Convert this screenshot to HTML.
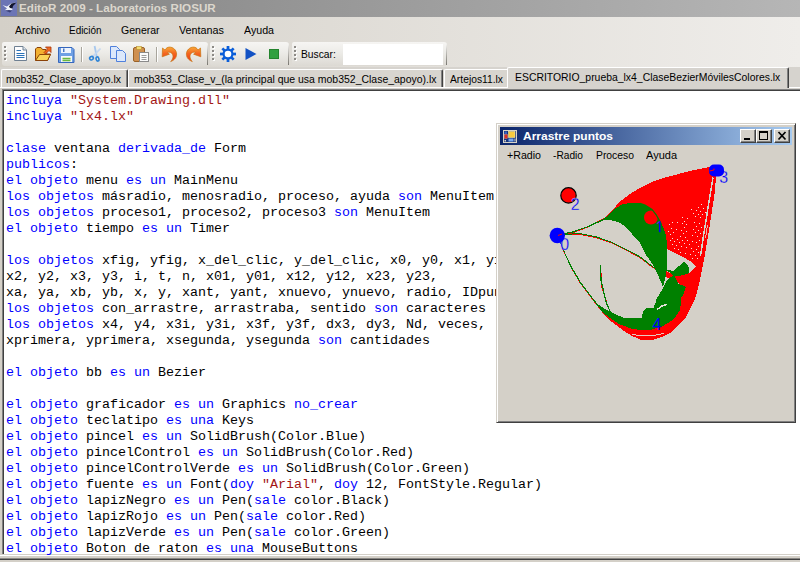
<!DOCTYPE html>
<html><head><meta charset="utf-8">
<style>
*{margin:0;padding:0;box-sizing:border-box}
html,body{width:800px;height:562px;overflow:hidden;background:#fff;font-family:"Liberation Sans",sans-serif;font-size:11.5px;color:#000}
.abs{position:absolute}
.tx{position:absolute;white-space:nowrap;transform-origin:0 0;line-height:14px;font-size:11.5px}
#title{left:0;top:0;width:800px;height:17px;background:linear-gradient(90deg,#828282,#b6b6b6)}
#menu{left:0;top:17px;width:800px;height:25px;background:linear-gradient(90deg,#d4d0c8,#efedea)}
#tool{left:0;top:42px;width:800px;height:25px;background:linear-gradient(90deg,#d4d0c8,#efedea)}
.tb{position:absolute;top:0px;height:24px;background:linear-gradient(#f6f5f3,#ecebe7 11px,#dcd9d3);border-radius:2px 3px 3px 3px}
.tb:after{content:"";position:absolute;right:0;top:2px;bottom:1px;width:1px;background:linear-gradient(rgba(120,118,112,0),rgba(110,108,102,.9))}
.grip{position:absolute;left:2px;top:4px;width:3px;height:16px}
.grip i{position:absolute;left:0;width:2px;height:2px;background:#8c8a86;box-shadow:1px 1px 0 #fff}
.sep{position:absolute;top:5px;width:1px;height:15px;background:#a8a59c;box-shadow:1px 0 0 #fff}
#tabs{left:0;top:67px;width:800px;height:22px;background:#d6d3ce}
.tab{position:absolute;top:2px;height:18px;border-top:1px solid #fff;border-left:1px solid #fff;border-right:1px solid #404040;box-shadow:inset -1px 0 0 #808080;border-radius:2px 2px 0 0;background:#d8d5cf}
.tab.sel{top:0;height:21px;background:#d6d3ce;z-index:2}
#tabline{left:0;top:87px;width:800px;height:1px;background:#fff}
#ed{left:2px;top:89px;width:798px;height:465px;background:#fff;border-left:1px solid #808080;border-top:1px solid #808080;box-shadow:inset 1px 1px 0 #404040}
pre{position:absolute;left:6px;top:93.3px;font-family:"Liberation Mono",monospace;font-size:12px;transform:scaleX(1.1109);transform-origin:0 0;line-height:16px;color:#000;white-space:pre}
pre b{font-weight:normal;color:#0000ff}
pre i{font-style:normal;color:#a31515}
#win{left:496px;top:123px;width:300px;height:300px;background:#d4d0c8;border:1px solid;border-color:#d4d0c8 #404040 #404040 #d4d0c8;box-shadow:inset 1px 1px 0 #fff,inset -1px -1px 0 #808080}
#wt{left:3px;top:3px;width:292px;height:18px;background:linear-gradient(90deg,#0a246a,#a6caf0)}
.wb{position:absolute;top:2px;width:16px;height:14px;background:#d4d0c8;border:1px solid;border-color:#fff #404040 #404040 #fff;box-shadow:inset -1px -1px 0 #808080}
</style></head><body>
<div id="title" class="abs">
<svg class="abs" style="left:1px;top:0" width="16" height="16"><rect width="16" height="16" fill="#6b75b5"/><path d="M1.5 5 L6 6.5 L10 3.5 L15 2.5 L11 6.5 L11.5 9.5 L8 11.5 L4 10 L6 8.5 Z" fill="#eef2fa"/><path d="M8 6.5 L10.5 3.5 L15.5 2.5 L12 6 L11.5 8.5 L9 8Z" fill="#10132c"/><path d="M4 10.5 L9 12.5 L11 10.5 L8 10Z" fill="#39407a"/></svg>
<span class="tx" style="left:19.2px;top:1px;font-weight:bold;color:#dcd7cd;transform:scaleX(1.013)">EditoR 2009 - Laboratorios RIOSUR</span>
</div>
<div id="menu" class="abs">
<span class="tx" style="left:15px;top:6px;transform:scaleX(.912)">Archivo</span>
<span class="tx" style="left:69.4px;top:6px;transform:scaleX(.864)">Edición</span>
<span class="tx" style="left:121.4px;top:6px;transform:scaleX(.915)">Generar</span>
<span class="tx" style="left:179.4px;top:6px;transform:scaleX(.938)">Ventanas</span>
<span class="tx" style="left:244px;top:6px;transform:scaleX(.926)">Ayuda</span>
</div>
<div id="tool" class="abs">
 <div class="tb" style="left:2px;width:206px"><div class="grip"><i style="top:0"></i><i style="top:4px"></i><i style="top:8px"></i><i style="top:12px"></i></div><div class="sep" style="left:79px"></div><div class="sep" style="left:154px"></div></div>
 <div class="tb" style="left:210px;width:79px"><div class="grip"><i style="top:0"></i><i style="top:4px"></i><i style="top:8px"></i><i style="top:12px"></i></div></div>
 <div class="tb" style="left:292px;width:155px"><div class="grip"><i style="top:0"></i><i style="top:4px"></i><i style="top:8px"></i><i style="top:12px"></i></div><div class="abs" style="left:51px;top:2px;width:100px;height:21px;background:#fff"></div></div>
 <span class="tx" style="left:301.4px;top:5px;transform:scaleX(.894)">Buscar:</span>
 <!-- ICONS -->
 <svg class="abs" style="left:0;top:0" width="300" height="25" id="icons">
  <!-- new -->
  <path d="M14.5 4.5 H23 L26.5 8 V18.5 H14.5Z" fill="#fdfdfe" stroke="#6f8092"/><path d="M23 4.5 V8 H26.5" fill="#dfe6ee" stroke="#6f8092"/>
  <path d="M16.5 8.5H21 M16.5 11.5H24.5 M16.5 13.5H24.5 M16.5 15.5H24.5" stroke="#2a72b8" stroke-width="1.2"/>
  <!-- open -->
  <path d="M35.5 18.5 V7 L37 5.5 H41 L42.5 7.5 H46 V12 H50.5 L47.5 18.5Z" fill="#f2b030" stroke="#8a4208"/>
  <path d="M35.8 18 L39.5 12.5 H50.5 L47.5 18.5 H35.8Z" fill="#f9d458" stroke="#8a4208"/>
  <path d="M44 10.5 L47.5 7 L45.5 5 H51 V10.5 L49 8.5 L45.5 12Z" fill="#f06a20" stroke="#a83208" stroke-width=".8"/>
  <!-- save -->
  <path d="M58.5 5.5 H72 L74 7.5 V20.5 H58.5Z" fill="#6fa0e4" stroke="#3566bd"/>
  <rect x="61" y="6" width="10" height="5" fill="#eef4fd"/><rect x="63" y="6.500" width="1.500" height="3.500" fill="#4a78c8"/>
  <rect x="61" y="14" width="11" height="6" fill="#f6f8fa"/><path d="M62.5 16.5H70.5 M62.5 18.5H70.5" stroke="#6ab840" stroke-width="1.3"/>
  <!-- cut -->
  <path d="M94.600 4 L96.800 15" stroke="#a8c8ee" stroke-width="1.800"/><path d="M100.500 6.500 L92.500 14.800" stroke="#c4d8f2" stroke-width="1.800"/>
  <ellipse cx="91.500" cy="16.200" rx="1.900" ry="1.600" fill="none" stroke="#2f84d6" stroke-width="1.600" transform="rotate(-30 91.500 16.200)"/><ellipse cx="97.500" cy="17" rx="1.400" ry="2.100" fill="none" stroke="#2f84d6" stroke-width="1.600" transform="rotate(-15 97.500 17)"/>
  <!-- copy -->
  <path d="M110.500 4.500 H116.500 L119.500 7.500 V16.500 H110.500Z" fill="#dce8fb" stroke="#4f80dc"/>
  <path d="M116.500 8.500 H122.500 L125.500 11.500 V19.500 H116.500Z" fill="#dce8fb" stroke="#4f80dc"/>
  <!-- paste -->
  <rect x="133.500" y="5.500" width="11" height="14" rx="1.500" fill="#cf9050" stroke="#9a6228"/><rect x="136.500" y="4.500" width="5" height="3" fill="#f4dc70" stroke="#b89030" stroke-width=".6"/>
  <rect x="139.500" y="10.500" width="9" height="9" fill="#fbfbfb" stroke="#8a8a8a"/><path d="M141.500 13.500H146.500 M141.500 15.500H146.500 M141.500 17.500H146.500" stroke="#9a9a9a"/>
  <defs><linearGradient id="ur" x1="0" y1="0" x2="0" y2="1"><stop offset="0" stop-color="#f8a838"/><stop offset=".45" stop-color="#f46420"/><stop offset="1" stop-color="#ee3818"/></linearGradient></defs><!-- undo -->
  <path d="M162.500 6 L162.200 14.800 L169.400 12.200 L167.500 10.500 C170.500 9.500 173 11.500 173 14.500 C173 16.500 172 18 170.700 19.600 C174.500 18 176.700 15.500 176.600 12 C176.500 8 173 5 169.400 5.100 C167.500 5.100 166 6.300 165 8 Z" fill="url(#ur)" stroke="#c87410" stroke-width=".7"/>
  <!-- redo -->
  <path d="M200.500 6 L200.800 14.800 L193.600 12.200 L195.500 10.500 C192.500 9.500 190 11.500 190 14.500 C190 16.500 191 18 192.300 19.600 C188.500 18 186.300 15.500 186.400 12 C186.500 8 190 5 193.600 5.100 C195.500 5.100 197 6.300 198 8 Z" fill="url(#ur)" stroke="#c87410" stroke-width=".7"/>
  <!-- gear -->
  <g transform="translate(228 12)" fill="#0b5ed9"><circle r="5.500"/><g id="t"><rect x="-1.350" y="-8" width="2.700" height="16"/></g><use href="#t" transform="rotate(45)"/><use href="#t" transform="rotate(90)"/><use href="#t" transform="rotate(135)"/><circle r="3.300" fill="#fff"/></g>
  <!-- play -->
  <path d="M245.500 6 L256.500 12 L245.500 18Z" fill="#1352c4"/>
  <!-- stop -->
  <rect x="269.500" y="7.500" width="9" height="9" fill="#32a040" stroke="#24842e"/>
 </svg>
</div>
<div id="tabs" class="abs">
 <div class="tab" style="left:1px;width:127px"></div>
 <div class="tab" style="left:128px;width:315px"></div>
 <div class="tab" style="left:444px;width:67px"></div>
 <div class="tab sel" style="left:507px;width:282px"></div>
 <span class="tx" style="left:6px;top:5px;transform:scaleX(.908)">mob352_Clase_apoyo.lx</span>
 <span class="tx" style="left:134px;top:5px;transform:scaleX(.910)">mob353_Clase_v_(la principal que usa mob352_Clase_apoyo).lx</span>
 <span class="tx" style="left:449.5px;top:5px;transform:scaleX(.895)">Artejos11.lx</span>
 <span class="tx" style="left:514.8px;top:2.5px;transform:scaleX(.905);z-index:3">ESCRITORIO_prueba_lx4_ClaseBezierMóvilesColores.lx</span>
</div>
<div id="tabline" class="abs"></div>
<div id="ed" class="abs"></div>
<div class="abs" style="left:0;top:554px;width:800px;height:8px;background:linear-gradient(#d4d0c8 0 1px,#fff 1px 2px,#d4d0c8 2px 4px,#8a8884 4px 5px,#404040 5px 6px,#d4d0c8 6px 8px)"></div>
<div class="abs" style="left:0;top:88px;width:2px;height:466px;background:#d4d0c8"></div>
<pre><b>incluya</b> <i>"System.Drawing.dll"</i>
<b>incluya</b> <i>"lx4.lx"</i>

<b>clase</b> ventana <b>derivada_de</b> Form
<b>publicos</b>:
<b>el objeto</b> menu <b>es un</b> MainMenu
<b>los objetos</b> másradio, menosradio, proceso, ayuda <b>son</b> MenuItem
<b>los objetos</b> proceso1, proceso2, proceso3 <b>son</b> MenuItem
<b>el objeto</b> tiempo <b>es un</b> Timer

<b>los objetos</b> xfig, yfig, x_del_clic, y_del_clic, x0, y0, x1, y1,
x2, y2, x3, y3, i, t, n, x01, y01, x12, y12, x23, y23,
xa, ya, xb, yb, x, y, xant, yant, xnuevo, ynuevo, radio, IDpunto
<b>los objetos</b> con_arrastre, arrastraba, sentido <b>son</b> caracteres
<b>los objetos</b> x4, y4, x3i, y3i, x3f, y3f, dx3, dy3, Nd, veces,
xprimera, yprimera, xsegunda, ysegunda <b>son</b> cantidades

<b>el objeto</b> bb <b>es un</b> Bezier

<b>el objeto</b> graficador <b>es un</b> Graphics <b>no_crear</b>
<b>el objeto</b> teclatipo <b>es una</b> Keys
<b>el objeto</b> pincel <b>es un</b> SolidBrush(Color.Blue)
<b>el objeto</b> pincelControl <b>es un</b> SolidBrush(Color.Red)
<b>el objeto</b> pincelControlVerde <b>es un</b> SolidBrush(Color.Green)
<b>el objeto</b> fuente <b>es un</b> Font(<b>doy</b> <i>"Arial"</i>, <b>doy</b> 12, FontStyle.Regular)
<b>el objeto</b> lapizNegro <b>es un</b> Pen(<b>sale</b> color.Black)
<b>el objeto</b> lapizRojo <b>es un</b> Pen(<b>sale</b> color.Red)
<b>el objeto</b> lapizVerde <b>es un</b> Pen(<b>sale</b> color.Green)
<b>el objeto</b> Boton de raton <b>es una</b> MouseButtons</pre>
<div id="win" class="abs">
 <div id="wt" class="abs">
  <svg class="abs" style="left:3px;top:3px" width="14" height="13"><rect x=".5" y=".5" width="13" height="12" fill="#16347c" stroke="#d8d4c8"/><rect x="1.500" y="1.500" width="2.500" height="2.500" fill="#3a62c0"/><rect x="1.500" y="4.500" width="3" height="4" fill="#e03020" stroke="#f0a090" stroke-width=".4"/><rect x="5.500" y="1.500" width="6.500" height="6" fill="#f8cc40" stroke="#fbe9a0" stroke-width=".6"/><rect x="5.500" y="8.500" width="5" height="3" fill="#78a8f0"/><rect x="1.500" y="10" width="1.500" height="1.500" fill="#d8d4c8"/><rect x="11.500" y="8.500" width="1" height="3" fill="#d8d4c8"/></svg>
  <span class="tx" style="left:23px;top:2px;font-weight:bold;color:#fff;transform:scaleX(1.043)">Arrastre puntos</span>
  <div class="wb" style="left:240px"><svg width="14" height="12" class="abs" style="left:0;top:0"><rect x="3" y="8" width="6" height="2"/></svg></div>
  <div class="wb" style="left:256px"><svg width="14" height="12" class="abs" style="left:0;top:0"><rect x="2.500" y="1.500" width="8" height="8" fill="none" stroke="#000"/><rect x="2" y="1" width="9" height="2"/></svg></div>
  <div class="wb" style="left:274px"><svg width="14" height="12" class="abs" style="left:0;top:0"><path d="M3.500 2 L10.500 9.500 M10.500 2 L3.500 9.500" stroke="#000" stroke-width="1.700"/></svg></div>
 </div>
 <span class="tx" style="left:9.700px;top:24px;transform:scaleX(.925)">+Radio</span>
 <span class="tx" style="left:56px;top:24px;transform:scaleX(.885)">-Radio</span>
 <span class="tx" style="left:98.500px;top:24px;transform:scaleX(.901)">Proceso</span>
 <span class="tx" style="left:148.800px;top:24px;transform:scaleX(.957)">Ayuda</span>
</div>
<!--DRAWING-START--><svg class="abs" style="left:0;top:0" width="800" height="562" shape-rendering="crispEdges">
 <defs>
  <pattern id="dots" width="6" height="5" patternUnits="userSpaceOnUse" patternTransform="rotate(28)"><rect x="1" y="1" width="1.200" height="1.200" fill="#e8dcd8"/></pattern>
  <clipPath id="dotclip"><path d="M668 226 L690 206 L706 204 L702 250 L694 263 L680 254 L668 246Z"/></clipPath>
 </defs>
 <!-- red main ring -->
 <path fill="#ff0000" d="M558 235 L572 232 L588 226 L604 218 L609 214 L620 201.500 L630 194 L640 187.800 L652 182 L665 177.500 L690 171 L712 166.500 L720 170 L716 177 L714.400 195 L709 230 L704 260 L700 280 L695.500 297.500 L690 309 L685 318.500 L678 326 L671 332.500 L662 337 L653.500 339.800 L641 339.800 L632 336 L623.750 330.750 L612 322 L602.750 313 L590.500 297.500 L580 283.500 L571 268 L562.500 250 L559 240
   L560 240 L568 262 L580 281.500 L597.500 304.500 L611 315 L624 322 L642 325 L660 322 L672 312 L680 300 L683 295 L686 287 L689 273 L695 267.500 L696 266 L690 261 L677.500 254 L667 249 L660 240 L650 225 L640 215 L625 215 L610 216 L604 219.500 L588 227.500 L572 233.500 L558 236.500Z"/>
 <!-- red swoosh under leaf -->
 <path fill="#ff0000" d="M665 270.500 L670 273 L674 275.500 L689 273 L697 267 L698 290 L686 287.500 L679 284 L674 276 L670 279.500 L667 277.500 L665 275Z"/>
 <!-- dotted moire -->
 <path fill="#f2e6e4" d="M668 231h1v1h-1zM669 224h1v1h-1zM670 234h1v1h-1zM670 240h1v1h-1zM671 228h1v1h-1zM672 222h1v1h-1zM672 238h1v1h-1zM672 244h1v1h-1zM673 232h1v1h-1zM674 241h1v1h-1zM674 248h1v1h-1zM676 229h1v1h-1zM676 245h1v1h-1zM677 222h1v1h-1zM677 239h1v1h-1zM678 249h1v1h-1zM679 242h1v1h-1zM680 236h1v1h-1zM680 252h1v1h-1zM681 230h1v1h-1zM681 246h1v1h-1zM682 217h1v1h-1zM682 223h1v1h-1zM682 240h1v1h-1zM683 233h1v1h-1zM684 221h1v1h-1zM684 227h1v1h-1zM684 243h1v1h-1zM685 237h1v1h-1zM685 253h1v1h-1zM686 224h1v1h-1zM686 231h1v1h-1zM686 247h1v1h-1zM687 218h1v1h-1zM687 240h1v1h-1zM689 244h1v1h-1zM690 254h1v1h-1zM691 209h1v1h-1zM691 248h1v1h-1zM692 235h1v1h-1zM692 241h1v1h-1zM692 258h1v1h-1zM693 213h1v1h-1zM693 229h1v1h-1zM693 251h1v1h-1zM694 222h1v1h-1zM695 216h1v1h-1zM695 232h1v1h-1zM695 255h1v1h-1zM696 210h1v1h-1zM696 226h1v1h-1zM696 242h1v1h-1zM696 249h1v1h-1zM697 236h1v1h-1zM697 258h1v1h-1zM698 207h1v1h-1zM698 214h1v1h-1zM698 230h1v1h-1zM698 246h1v1h-1zM698 252h1v1h-1zM699 223h1v1h-1zM699 240h1v1h-1zM700 211h1v1h-1zM700 217h1v1h-1zM700 233h1v1h-1zM701 204h1v1h-1zM701 227h1v1h-1zM702 214h1v1h-1zM702 237h1v1h-1zM703 208h1v1h-1zM703 231h1v1h-1zM705 212h1v1h-1z"/>
 <!-- light lines in right band -->
 <path d="M713 177.500 L704.400 230 L700.500 256" stroke="#cfd6cc" stroke-width="1.500" fill="none"/>
 <path d="M707.500 225 L705.500 238" stroke="#eab0a8" stroke-width="1" fill="none"/>
 <path d="M632.500 334.500 Q648 337.500 664 333.500" stroke="#e8c8c0" stroke-width="1" fill="none"/>
 <!-- second thin curve from point 0 -->
 <path d="M558 235.300 L580 234.300 L596 237.500 L612 243.100 L628 251.100 L640 257.500 L653 267.800 L665 271.800" stroke="#ff0000" stroke-width="1" fill="none"/>
 <path d="M558 234.700 L580 233.600 L596 236.800 L612 242.400 L628 250.400 L640 256.800 L653 267 L665 271" stroke="#008000" stroke-width="1" fill="none"/>
 <!-- green crescent -->
 <path fill="#008000" d="M558 234.500 L572 231.500 L588 226 L604 218.500 L609 214.600 L610.500 212.700 L616 208 L623.300 203.800 L632 203 L640 203.300 L645 205 L652 209.400 L656 214.500 L658.750 219.400 L661.500 224 L663.750 228.750 L666 235 L667 245 L667 255 L667 268 L665.500 277 L664 283 L663 287 L659 277.500 L652.500 264 L646 255 L640 243 L632 234 L625 226.300 L620 223 L615.300 221 L607.300 219.900 L604 220 L588 227.300 L572 232.700 L558 235.500Z"/>
 <!-- green leaf -->
 <path fill="#008000" d="M667 269.500 L673 271 L679 266 L684 262 L687 264 L689 267.500 L689 273 L684 275 L676 276.500 L674 276 L670 272.500 L667 271Z"/>
 <!-- green lower body -->
 <path fill="#008000" d="M674 275.500 L678.750 284 L683.750 286 L686 287 L683 295 L681.500 297.500 L680 309.750 L674.500 318.500 L668 323 L662.250 326.400 L650 330 L641 330 L632.500 329 L618.500 323.750 L610 318 L602.750 312.400 L597.500 306 L590 296 L580 283 L570 266 L563 250 L559 240
   L559.800 240 L563.900 250 L571 265.300 L580.900 282.300 L590.600 295.200 L597.500 304 L605 309 L611.500 312.400 L618 315.500 L623.750 317.600 L632 318.500 L642 317.600 L642.500 314 L643.400 311.500 L645 309 L647.400 308 L650.500 307.500 L653.500 308 L655.500 303 L657 297.500 L659 295 L662 290 L664.500 285.500 L666.500 281 L669.500 278Z"/>
 <!-- sliver -->
 <path d="M657 309.500 L662 306 L666.600 304.300" stroke="#e4e0d8" stroke-width="1.500" fill="none"/>
 <!-- thin green line -->
 <path d="M601.500 273 L602 288 L607 303" stroke="#ff0000" stroke-width="1" fill="none"/>
 <path d="M600.500 265 L601 280 L606.250 302.750 L610.600 312.400" stroke="#008000" stroke-width="1.200" fill="none"/>
 <g shape-rendering="auto">
 <g style="font-family:'Liberation Sans',sans-serif;font-size:16px" fill="#0000ff"><text x="560.300" y="250" stroke="#d4d0c8" stroke-width=".28">0</text><text x="719.300" y="183" stroke="#d4d0c8" stroke-width=".28">3</text></g>
 <!-- points -->
 <circle cx="557.300" cy="235.500" r="7.700" fill="#0000ff"/>
 <circle cx="568.500" cy="195.400" r="7.700" fill="#ff0000" stroke="#000" stroke-width="1.200"/>
 <circle cx="651" cy="217.500" r="7" fill="#ff0000"/>
 <path d="M640 203.300 L645 205 L652 209.400 L656 214.500 L658.750 219.400 L661.500 224.500" stroke="#008000" stroke-width="1.300" fill="none"/>
 <path d="M659.700 221.300 V232.200" stroke="#0000ff" stroke-width="1.600" fill="none"/><path d="M659.500 221.500 L656.800 223.800" stroke="#6a20e0" stroke-width="1.200" fill="none"/>
 <rect x="709" y="164.500" width="15" height="12" rx="5" fill="#0000ff"/>
 <path d="M709.500 171 L714 170 L714 168.500" stroke="#ff0000" stroke-width="1" fill="none"/>
 <path d="M558 235.500 L562 234" stroke="#ff0000" stroke-width="1" fill="none"/>
 <g style="font-family:'Liberation Sans',sans-serif;font-size:16px" fill="#0000ff">
  
  
  <text x="570.800" y="210" stroke="#d4d0c8" stroke-width=".28">2</text>
  
  <text x="652.500" y="330">4</text>
 </g>
 </g>
</svg>
<!--DRAWING-END-->
</body></html>
